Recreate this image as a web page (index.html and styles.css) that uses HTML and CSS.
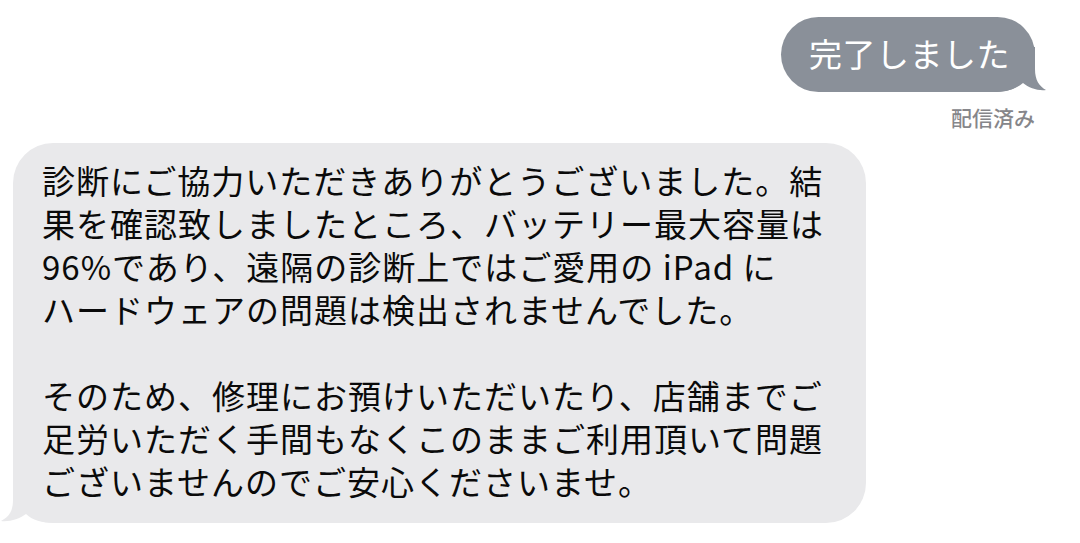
FILE: index.html
```html
<!DOCTYPE html>
<html lang="ja">
<head>
  <meta charset="UTF-8">
  <meta name="viewport" content="width=device-width, initial-scale=1.0">
  <title>メッセージ</title>
  <link rel="stylesheet" href="styles.css">
</head>
<body>
  <div class="thread">
    <div class="row sent-row">
      <div class="bubble sent">
        <svg class="tail tail-right" width="60" height="45" viewBox="0 0 60 45">
          <path d="M47 0 L47 22 C47 33 51 39 58 43 C50 44 41 41 35 36 C28 42 18 45 5 45 L5 0 Z" />
        </svg>
        <span class="text">完了しました</span>
      </div>
    </div>
    <div class="status">配信済み</div>

    <div class="row">
      <div class="bubble received">
        <svg class="tail tail-left" width="60" height="45" viewBox="0 0 60 45">
          <path d="M13 0 L13 22 C13 33 9 39 1 43 C10 44 19 41 26 36 C32 42 42 45 55 45 L55 0 Z" />
        </svg>
        <p class="text">診断にご協力いただきありがとうございました。結<br>果を確認致しましたところ、バッテリー最大容量は<br>96%であり、遠隔の診断上ではご愛用の iPad に<br>ハードウェアの問題は検出されませんでした。</p>
        <p class="text">そのため、修理にお預けいただいたり、店舗までご<br>足労いただく手間もなくこのままご利用頂いて問題<br>ございませんのでご安心くださいませ。</p>
      </div>
    </div>
  </div>
</body>
</html>
```

FILE: styles.css
```css
* {
  box-sizing: border-box;
}

body {
  margin: 0;
  background-color: #ffffff;
  font-family: "Noto Sans CJK JP", "Noto Sans", sans-serif;
}

.thread {
  display: flex;
  flex-direction: column;
  padding: 17px 45px 0 13px;
}

.row {
  display: flex;
}

.sent-row {
  justify-content: flex-end;
}

.bubble {
  position: relative;
  border-radius: 40px;
}

.bubble .text {
  position: relative;
}

.sent {
  background-color: #8a9099;
  color: #ffffff;
  font-size: 33px;
  line-height: 43px;
  height: 75px;
  padding: 15px 25px 0 28px;
  border-radius: 38px;
  letter-spacing: 0.5px;
}

.sent .tail path {
  fill: #8a9099;
}

.status {
  align-self: flex-end;
  margin-top: 13px;
  font-size: 21px;
  line-height: 24px;
  font-weight: 500;
  color: #86868a;
}

.received {
  margin-top: 14px;
  width: 853px;
  background-color: #e9e9eb;
  color: #0a0a0a;
  font-size: 33px;
  line-height: 43px;
  padding: 16px 20px 20px 29px;
  letter-spacing: 1px;
}

.received p {
  margin: 0;
}

.received p + p {
  margin-top: 43px;
}

.received .tail path {
  fill: #e9e9eb;
}

.tail {
  position: absolute;
  bottom: 0;
}

.tail-left {
  left: -13px;
}

.tail-right {
  right: -13px;
}
```
